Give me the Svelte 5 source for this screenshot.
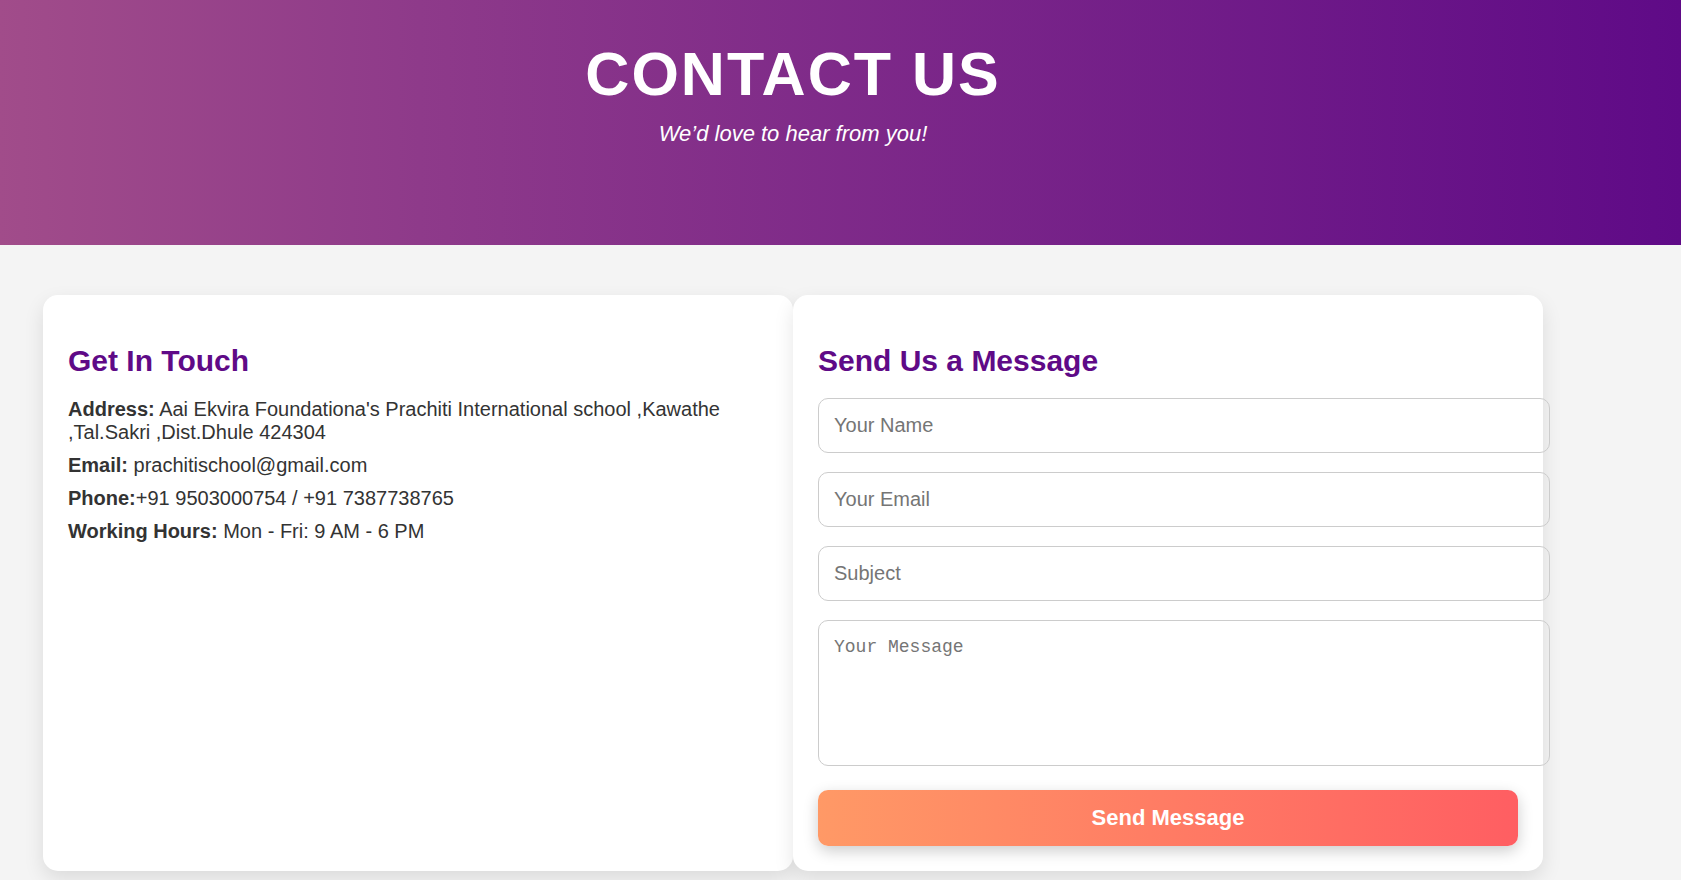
<script>
  const details = [
    { label: 'Address:', text: " Aai Ekvira Foundationa's Prachiti International school ,Kawathe ,Tal.Sakri ,Dist.Dhule 424304" },
    { label: 'Email:', text: ' prachitischool@gmail.com' },
    { label: 'Phone:', text: '+91 9503000754 / +91 7387738765' },
    { label: 'Working Hours:', text: ' Mon - Fri: 9 AM - 6 PM' }
  ];

  let form = $state({ name: '', email: '', subject: '', message: '' });

  function submit(event) {
    event.preventDefault();
  }
</script>

<header class="hero">
  <h1>CONTACT US</h1>
  <p>We’d love to hear from you!</p>
</header>

<main>
  <div class="columns">
    <section class="card">
      <h2>Get In Touch</h2>
      {#each details as item}
        <p class="detail"><strong>{item.label}</strong>{item.text}</p>
      {/each}
    </section>

    <section class="card">
      <h2>Send Us a Message</h2>
      <form onsubmit={submit}>
        <input type="text" placeholder="Your Name" aria-label="Your Name" bind:value={form.name} />
        <input type="email" placeholder="Your Email" aria-label="Your Email" bind:value={form.email} />
        <input type="text" placeholder="Subject" aria-label="Subject" bind:value={form.subject} />
        <textarea placeholder="Your Message" aria-label="Your Message" bind:value={form.message}></textarea>
        <button type="submit">Send Message</button>
      </form>
    </section>
  </div>
</main>

<style>
  :global(body) {
    margin: 0;
    background: #f4f4f4;
    color: #333;
    font-family: "Liberation Sans", Arial, sans-serif;
  }

  .hero {
    padding: 40px 95px 97px 0;
    background: linear-gradient(90deg, #a14c8a, #8e3a8a 25%, #5f0a87);
    color: #fff;
    text-align: center;
  }

  h1 {
    margin: 0;
    font-size: 61px;
    line-height: 68px;
    letter-spacing: 2px;
  }

  .hero p {
    margin: 11px 0 0;
    font-size: 22px;
    line-height: 29px;
    font-style: italic;
  }

  main {
    padding: 50px 95px 50px 0;
  }

  .columns {
    display: grid;
    grid-template-columns: 1fr 1fr;
    max-width: 1500px;
    margin: 0 auto;
  }

  .card {
    min-width: 0;
    padding: 25px;
    border-radius: 15px;
    background: #fff;
    box-shadow: 0 8px 20px rgba(0, 0, 0, 0.1);
  }

  h2 {
    margin: 23px 0 20px;
    color: #5f0a87;
    font-size: 30px;
    line-height: 35px;
  }

  .detail {
    margin: 0 0 10px;
    font-size: 20px;
    line-height: 23px;
  }

  form {
    display: flex;
    flex-direction: column;
    align-items: flex-start;
    gap: 19px;
  }

  /* Fields keep their own padding outside the column width. */
  input,
  textarea {
    box-sizing: content-box;
    width: 100%;
    margin: 0;
    padding: 15px;
    border: 1px solid #ccc;
    border-radius: 10px;
    background: transparent;
    color: #333;
    font-family: inherit;
    font-size: 20px;
    line-height: 23px;
    outline: none;
  }

  input {
    height: 23px;
    flex-shrink: 0;
  }

  textarea {
    height: 114px;
    font-family: Consolas, "Liberation Mono", monospace;
    font-size: 18px;
    resize: none;
  }

  input::placeholder,
  textarea::placeholder {
    color: #757575;
  }

  button {
    width: 100%;
    margin-top: 5px;
    padding: 15px;
    border: 0;
    border-radius: 10px;
    background: linear-gradient(90deg, #ff9966, #ff5e62);
    box-shadow: 0 5px 15px rgba(0, 0, 0, 0.2);
    color: #fff;
    font-family: inherit;
    font-size: 22px;
    font-weight: bold;
    line-height: 26px;
    cursor: pointer;
  }
</style>
